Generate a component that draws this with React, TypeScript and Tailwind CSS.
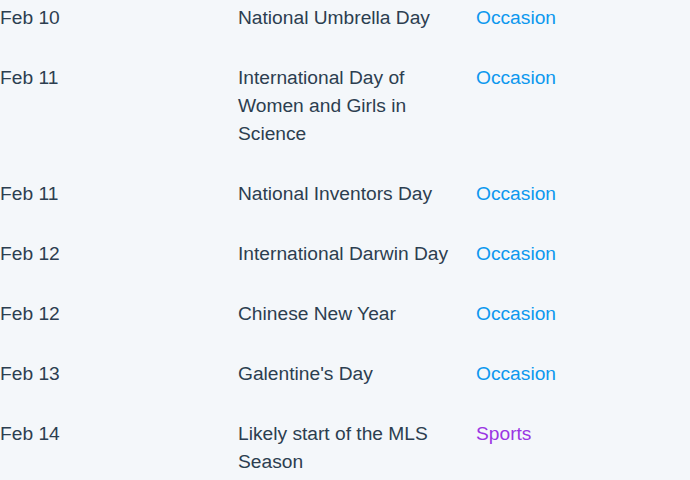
const ROWS = [
  { date: "Feb 10", name: "National Umbrella Day", tag: "Occasion" },
  { date: "Feb 11", name: "International Day of Women and Girls in Science", tag: "Occasion" },
  { date: "Feb 11", name: "National Inventors Day", tag: "Occasion" },
  { date: "Feb 12", name: "International Darwin Day", tag: "Occasion" },
  { date: "Feb 12", name: "Chinese New Year", tag: "Occasion" },
  { date: "Feb 13", name: "Galentine's Day", tag: "Occasion" },
  { date: "Feb 14", name: "Likely start of the MLS Season", tag: "Sports" },
];

export default function App() {
  return (
    <div className="h-screen overflow-hidden bg-[#f4f7fa] pt-[4px] font-['Liberation_Sans',Arial,sans-serif] text-[19.2px] leading-[28px] text-[#2c3e50]">
      {ROWS.map((row, i) => (
        <div key={i} className="grid grid-cols-[238px_238px_1fr] pb-8">
          <div>{row.date}</div>
          <div className="pr-4">{row.name}</div>
          <div className={row.tag === "Sports" ? "text-[#9b35e3]" : "text-[#0d98ee]"}>
            {row.tag}
          </div>
        </div>
      ))}
    </div>
  );
}
